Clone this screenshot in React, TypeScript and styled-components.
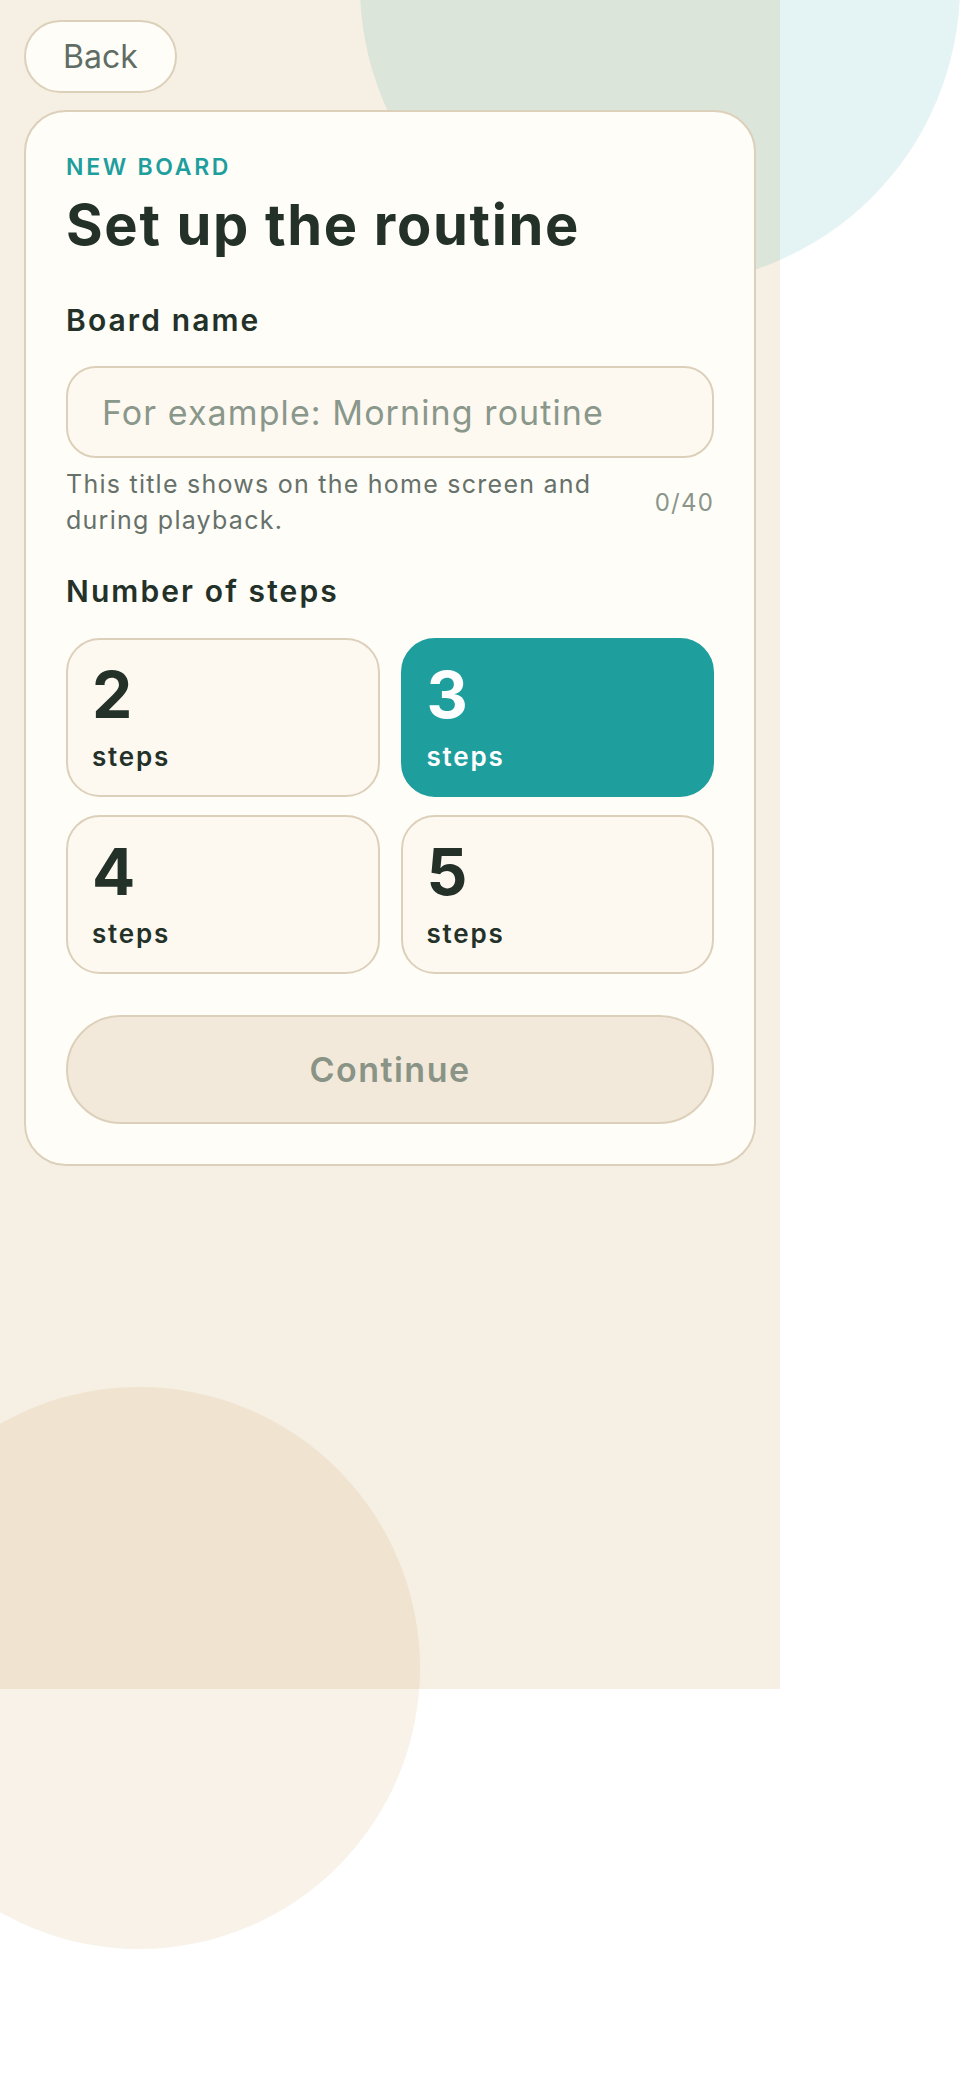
import { useState } from 'react'
import styled, { createGlobalStyle } from 'styled-components'

const GlobalStyle = createGlobalStyle`
  html, body {
    margin: 0;
    padding: 0;
    background: #ffffff;
  }
  body {
    font-family: Inter, 'Noto Sans', sans-serif;
    color: #233129;
  }
  * {
    box-sizing: border-box;
  }
`

const Page = styled.div`
  position: relative;
  min-height: 2078px;
  overflow: hidden;
`

const Shell = styled.div`
  width: 780px;
  min-height: 1689px;
  padding: 20px 24px;
  background: #f6efe3;
`

const Blob = styled.div<{ $tone: 'teal' | 'sand' }>`
  position: absolute;
  border-radius: 50%;
  pointer-events: none;
  z-index: 0;
  background: ${({ $tone }) => ($tone === 'teal' ? 'rgba(31, 158, 158, 0.12)' : 'rgba(214, 176, 110, 0.16)')};
`

const TopBlob = styled(Blob)`
  left: 360px;
  top: -315px;
  width: 600px;
  height: 600px;
`

const BottomBlob = styled(Blob)`
  left: -142px;
  top: 1387px;
  width: 562px;
  height: 562px;
`

const Content = styled.div`
  position: relative;
  z-index: 1;
  display: flex;
  flex-direction: column;
  align-items: flex-start;
  gap: 17px;
`

const BackButton = styled.button`
  display: inline-flex;
  align-items: center;
  height: 73px;
  padding: 0 37px;
  border: 2px solid #ddd0ba;
  border-radius: 999px;
  background: #fffdf8;
  color: #5f6d65;
  font-family: inherit;
  font-size: 32px;
  cursor: pointer;
`

const Card = styled.section`
  align-self: stretch;
  display: flex;
  flex-direction: column;
  padding: 40px;
  border: 2px solid #ddd0ba;
  border-radius: 42px;
  background: #fffdf8;
`

const Eyebrow = styled.div`
  font-size: 23px;
  font-weight: 600;
  line-height: 1.2;
  letter-spacing: 0.117em;
  text-transform: uppercase;
  color: #1f9e9e;
  margin-top: 2px;
`

const Title = styled.h1`
  margin: 11px 0 0;
  font-size: 56px;
  font-weight: 700;
  line-height: 1.15;
  letter-spacing: 0.03em;
  color: #233129;
`

const Label = styled.label<{ $gap: number }>`
  display: block;
  margin-top: ${({ $gap }) => $gap}px;
  font-size: 30px;
  font-weight: 600;
  line-height: 1.25;
  letter-spacing: 0.07em;
  color: #233129;
`

const NameInput = styled.input`
  margin-top: 27px;
  width: 100%;
  height: 92px;
  padding: 0 34px;
  border: 2px solid #ddd0ba;
  border-radius: 30px;
  background: #fdf9f1;
  color: #233129;
  font-family: inherit;
  font-size: 34px;
  letter-spacing: 0.032em;
  outline: none;

  &::placeholder {
    color: #8a978b;
  }
`

const HelpRow = styled.div`
  margin-top: 8px;
  display: flex;
  align-items: center;
  justify-content: space-between;
  gap: 16px;
`

const HelpText = styled.p`
  margin: 0;
  max-width: 560px;
  font-size: 25px;
  line-height: 36px;
  letter-spacing: 0.05em;
  color: #66716a;
`

const Counter = styled.span`
  font-size: 24px;
  letter-spacing: 0.05em;
  color: #8a958b;
`

const StepGrid = styled.div`
  margin-top: 27px;
  display: grid;
  grid-template-columns: 1fr 1fr;
  column-gap: 21px;
  row-gap: 18px;
`

const StepOption = styled.button<{ $active: boolean }>`
  display: flex;
  flex-direction: column;
  justify-content: center;
  align-items: flex-start;
  gap: 15px;
  min-height: 159px;
  padding: 22px 24px;
  border: 2px solid ${({ $active }) => ($active ? '#1f9e9e' : '#ddd0ba')};
  border-radius: 34px;
  background: ${({ $active }) => ($active ? '#1f9e9e' : '#fdf9f1')};
  color: ${({ $active }) => ($active ? '#ffffff' : '#233129')};
  font-family: inherit;
  text-align: left;
  cursor: pointer;
`

const StepCount = styled.span`
  font-size: 64px;
  font-weight: 700;
  line-height: 1;
  letter-spacing: 0.02em;
`

const StepUnit = styled.span`
  font-size: 26px;
  font-weight: 600;
  line-height: 1.15;
  letter-spacing: 0.07em;
`

const ContinueButton = styled.button`
  margin-top: 41px;
  height: 109px;
  border: 2px solid #ddd0ba;
  border-radius: 999px;
  background: #f2e9da;
  color: #8a9486;
  font-family: inherit;
  font-size: 34px;
  font-weight: 600;
  letter-spacing: 0.044em;
  cursor: not-allowed;
`

const stepChoices = [2, 3, 4, 5]

const App = () => {
  const [name, setName] = useState('')
  const [steps, setSteps] = useState(3)

  return (
    <>
      <GlobalStyle />
      <Page>
        <Shell>
          <Content>
            <BackButton type="button">Back</BackButton>
            <Card>
              <Eyebrow>New board</Eyebrow>
              <Title>Set up the routine</Title>

              <Label $gap={45} htmlFor="board-name">
                Board name
              </Label>
              <NameInput
                id="board-name"
                value={name}
                maxLength={40}
                placeholder="For example: Morning routine"
                onChange={(e) => setName(e.target.value)}
              />
              <HelpRow>
                <HelpText>This title shows on the home screen and during playback.</HelpText>
                <Counter>{name.length}/40</Counter>
              </HelpRow>

              <Label $gap={35}>Number of steps</Label>
              <StepGrid>
                {stepChoices.map((n) => (
                  <StepOption key={n} type="button" $active={steps === n} onClick={() => setSteps(n)}>
                    <StepCount>{n}</StepCount>
                    <StepUnit>steps</StepUnit>
                  </StepOption>
                ))}
              </StepGrid>

              <ContinueButton type="button" disabled={!name.trim()}>
                Continue
              </ContinueButton>
            </Card>
          </Content>
        </Shell>
        <TopBlob $tone="teal" />
        <BottomBlob $tone="sand" />
      </Page>
    </>
  )
}

export default App
